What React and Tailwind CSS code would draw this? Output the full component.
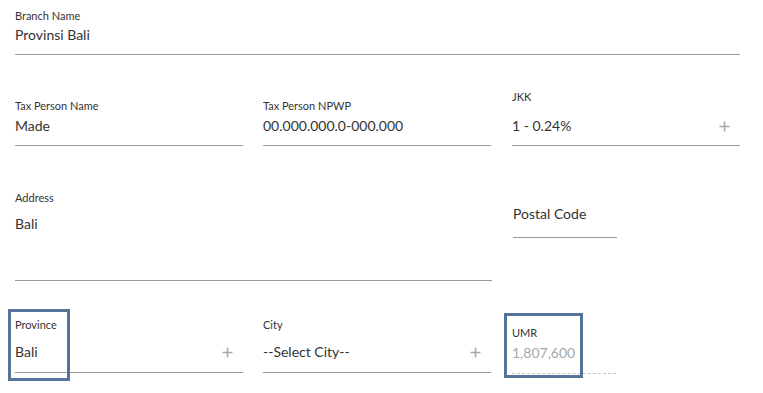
import React from "react";

const Plus = ({ className = "" }) => (
  <svg width="11" height="11" viewBox="0 0 11 11" className={className}>
    <path d="M5.5 0.5v10M0.5 5.5h10" stroke="#a9a9a9" strokeWidth="1.6" />
  </svg>
);

export default function App() {
  return (
    <div
      className="relative w-[763px] h-[393px] bg-white text-[#333] overflow-hidden"
      style={{ fontFamily: "Lato, 'Open Sans', sans-serif" }}
    >
      <div className="pl-[15px] pr-[23px]">
        {/* Row 1 */}
        <div className="pt-[9px] h-[55px] border-b border-[#9a9a9a]">
          <div className="text-[11px] leading-[14px]">Branch Name</div>
          <div className="mt-[3px] text-[14px] leading-[18px]">Provinsi Bali</div>
        </div>

        {/* Row 2 */}
        <div className="mt-[35px] flex gap-[20px]">
          <div className="w-[228px] h-[56px] pt-[9px] border-b border-[#9a9a9a]">
            <div className="text-[11px] leading-[14px]">Tax Person Name</div>
            <div className="mt-[4px] text-[14px] leading-[18px]">Made</div>
          </div>
          <div className="w-[228px] h-[56px] pt-[9px] border-b border-[#9a9a9a]">
            <div className="text-[11px] leading-[14px]">Tax Person NPWP</div>
            <div className="mt-[4px] text-[14px] leading-[18px]">00.000.000.0-000.000</div>
          </div>
          <div className="ml-[1px] w-[228px] h-[56px] border-b border-[#9a9a9a]">
            <div className="text-[11px] leading-[14px]">JKK</div>
            <div className="mt-[13px] flex items-center justify-between pr-[10px] text-[14px] leading-[18px]">
              <span>1 - 0.24%</span>
              <Plus />
            </div>
          </div>
        </div>

        {/* Row 3 */}
        <div className="mt-[45px] flex gap-[21px] items-start">
          <div className="w-[477px] h-[90px] border-b border-[#9a9a9a]">
            <div className="text-[11px] leading-[14px]">Address</div>
            <div className="mt-[10px] text-[14px] leading-[18px]">Bali</div>
          </div>
          <div className="w-[104px] pt-[14px] h-[47px] border-b border-[#9a9a9a]">
            <div className="text-[14px] leading-[18px]">Postal Code</div>
          </div>
        </div>

        {/* Row 4 */}
        <div className="mt-[37px] flex gap-[20px] items-start">
          <div className="w-[228px] h-[55px] border-b border-[#9a9a9a]">
            <div className="text-[11px] leading-[14px]">Province</div>
            <div className="mt-[11px] flex items-center justify-between pr-[10px] text-[14px] leading-[18px]">
              <span>Bali</span>
              <Plus />
            </div>
          </div>
          <div className="w-[228px] h-[55px] border-b border-[#9a9a9a]">
            <div className="text-[11px] leading-[14px]">City</div>
            <div className="mt-[11px] flex items-center justify-between pr-[10px] text-[14px] leading-[18px]">
              <span>--Select City--</span>
              <Plus />
            </div>
          </div>
          <div className="ml-[1px] w-[104px] mt-[8px] h-[48px] border-b border-dashed border-[#c8c8c8]">
            <div className="text-[11px] leading-[14px]">UMR</div>
            <div className="mt-[4px] text-[14px] leading-[18px] text-[#a8a8a8]">1,807,600</div>
          </div>
        </div>
      </div>

      {/* annotation boxes */}
      <div className="absolute left-[8px] top-[309px] w-[62px] h-[72px] border-[3px] border-[#56739a]" />
      <div className="absolute left-[504px] top-[313px] w-[79px] h-[65px] border-[3px] border-[#56739a]" />
    </div>
  );
}
